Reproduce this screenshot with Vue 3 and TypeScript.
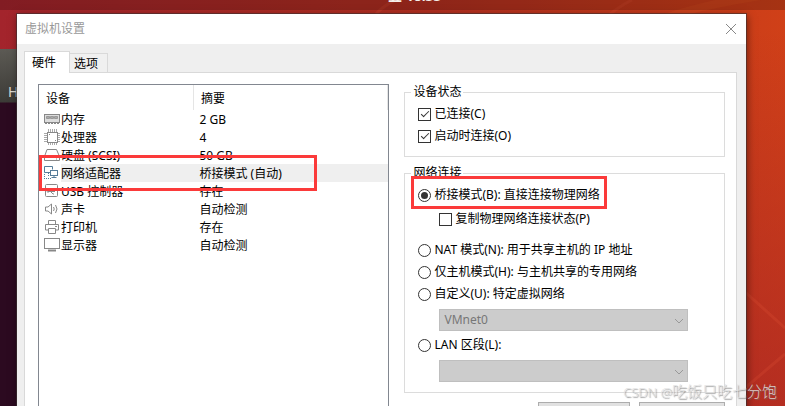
<script setup lang="ts">
import { ref } from 'vue'

interface Device {
  icon: string
  name: string
  summary: string
}

const devices: Device[] = [
  { icon: 'memory', name: '内存', summary: '2 GB' },
  { icon: 'cpu', name: '处理器', summary: '4' },
  { icon: 'disk', name: '硬盘 (SCSI)', summary: '50 GB' },
  { icon: 'network', name: '网络适配器', summary: '桥接模式 (自动)' },
  { icon: 'usb', name: 'USB 控制器', summary: '存在' },
  { icon: 'sound', name: '声卡', summary: '自动检测' },
  { icon: 'printer', name: '打印机', summary: '存在' },
  { icon: 'display', name: '显示器', summary: '自动检测' },
]

const selected = ref('network')
const connected = ref(true)
const connectAtPowerOn = ref(true)
const replicate = ref(false)
const mode = ref('bridged')
const vmnet = ref('VMnet0')
const segment = ref('')
</script>

<template>
  <div class="desktop">
    <svg class="wallpaper" viewBox="0 0 785 406" preserveAspectRatio="none" aria-hidden="true">
      <path d="M376 14 Q384 5 396 0" />
      <path d="M610 14 Q622 5 632 0" />
      <path class="band" d="M664 14 Q700 2 745 -6 L800 -6 Q730 4 690 14Z" />
      <path d="M745 292 L785 328" />
      <path d="M745 388 L785 354" />
    </svg>
    <div class="topbar"><span class="clock">五 18:33</span></div>
    <div class="dock"><span class="dock-label">H</span></div>

    <main class="dialog">
      <header class="titlebar">
        <h1>虚拟机设置</h1>
        <button class="close" type="button" aria-label="关闭">
          <svg width="12" height="12" viewBox="0 0 12 12"><path d="M1 1 L11 11 M11 1 L1 11" /></svg>
        </button>
      </header>

      <nav class="tabs" role="tablist">
        <button class="tab active" type="button" role="tab" aria-selected="true">硬件</button>
        <button class="tab" type="button" role="tab" aria-selected="false">选项</button>
      </nav>

      <section class="page">
        <div class="list">
          <table>
            <thead>
              <tr><th class="name-col">设备</th><th>摘要</th></tr>
            </thead>
            <tbody>
              <tr
                v-for="d in devices"
                :key="d.icon"
                :class="{ selected: d.icon === selected }"
                @click="selected = d.icon"
              >
                <td>
                  <div class="device">
                    <svg class="icon" width="18" height="18" viewBox="0 0 18 18" aria-hidden="true">
                      <g v-if="d.icon === 'memory'">
                        <rect x="1.5" y="4.5" width="15" height="8" fill="#ddd" />
                        <path d="M3.5 6.5h3v2h-3zM7.5 6.5h3v2h-3zM11.5 6.5h3v2h-3z" fill="#aaa" stroke="#999" />
                        <path d="M2 13.5h14" stroke-dasharray="2 1" />
                      </g>
                      <g v-else-if="d.icon === 'cpu'">
                        <path stroke="#aaa" d="M5.5 1v3M7.5 1v3M9.5 1v3M11.5 1v3M13.5 1v3M5.5 15v2M7.5 15v2M9.5 15v2M11.5 15v2M13.5 15v2M1 5.5h3M1 7.5h3M1 9.5h3M1 11.5h3M1 13.5h3M15 5.5h2M15 7.5h2M15 9.5h2M15 11.5h2M15 13.5h2" />
                        <rect x="4.5" y="4.500" width="10" height="10" />
                        <path d="M6 6.5h1M12 12.5h1" />
                      </g>
                      <g v-else-if="d.icon === 'disk'">
                        <path d="M4 3.5h9.500l3 7v4h-15v-4zM1.500 11.500h15M13 13h1" />
                      </g>
                      <g v-else-if="d.icon === 'network'" class="blue">
                        <path d="M7 8.500h-5.500v-6h8v3" />
                        <path d="M1 14.500h8M1.500 10v4M5.500 9v3" stroke-dasharray="1 1" />
                        <rect x="7.500" y="6.500" width="7" height="5" />
                        <path d="M11 12v2M8.500 13.500h5" />
                      </g>
                      <g v-else-if="d.icon === 'usb'">
                        <rect x="2.500" y="2.500" width="12" height="12" rx="1" />
                        <path d="M5 9.500h7M7 9l2-2.500h2M8 10l2 2h1" />
                        <circle cx="5" cy="9.500" r=".8" />
                      </g>
                      <g v-else-if="d.icon === 'sound'">
                        <path d="M2.500 7v4h2.500l3.500 3v-10l-3.500 3zM10.500 7q1.500 2 0 4M12.500 5q3 4 0 8" />
                      </g>
                      <g v-else-if="d.icon === 'printer'">
                        <path d="M5.500 6V2.500h7V6M5 12H2.500V6.500h13V12H13" />
                        <path d="M5.500 10.500h7v5h-7zM12 8.500h2" />
                      </g>
                      <g v-else>
                        <rect x="1.500" y="2.500" width="15" height="10" />
                        <path d="M5 14.500h8" stroke-width="2" />
                      </g>
                    </svg>
                    <span class="label">{{ d.name }}</span>
                  </div>
                </td>
                <td class="summary">{{ d.summary }}</td>
              </tr>
            </tbody>
          </table>
          <div class="mark mark-list"></div>
        </div>

        <div class="settings">
          <fieldset>
            <legend>设备状态</legend>
            <label class="option"><input v-model="connected" type="checkbox" />已连接(C)</label>
            <label class="option"><input v-model="connectAtPowerOn" type="checkbox" />启动时连接(O)</label>
          </fieldset>

          <fieldset class="network">
            <legend>网络连接</legend>
            <label class="option marked">
              <input v-model="mode" type="radio" name="mode" value="bridged" />桥接模式(B): 直接连接物理网络
              <span class="mark mark-option"></span>
            </label>
            <label class="option nested"><input v-model="replicate" type="checkbox" />复制物理网络连接状态(P)</label>
            <label class="option spaced"><input v-model="mode" type="radio" name="mode" value="nat" />NAT 模式(N): 用于共享主机的 IP 地址</label>
            <label class="option"><input v-model="mode" type="radio" name="mode" value="host" />仅主机模式(H): 与主机共享的专用网络</label>
            <label class="option"><input v-model="mode" type="radio" name="mode" value="custom" />自定义(U): 特定虚拟网络</label>
            <div class="select">
              <select v-model="vmnet" aria-label="特定虚拟网络" disabled>
                <option>VMnet0</option>
              </select>
              <svg width="10" height="6" viewBox="0 0 10 6"><path d="M1 1l4 4 4-4" /></svg>
            </div>
            <label class="option lan"><input v-model="mode" type="radio" name="mode" value="lan" />LAN 区段(L):</label>
            <div class="select">
              <select v-model="segment" aria-label="LAN 区段" disabled>
                <option value=""></option>
              </select>
              <svg width="10" height="6" viewBox="0 0 10 6"><path d="M1 1l4 4 4-4" /></svg>
            </div>
          </fieldset>

          <div class="actions">
            <button type="button" aria-label="LAN 区段"></button>
            <button type="button" aria-label="高级"></button>
          </div>
        </div>
      </section>
    </main>

    <div class="watermark"><span class="brand">CSDN @</span>吃饭只吃七分饱</div>
  </div>
</template>

<style>
body {
  margin: 0;
}
</style>

<style scoped>
.desktop {
  position: relative;
  box-sizing: border-box;
  height: 100vh;
  overflow: hidden;
  padding: 14px 39px 0 17px;
  background: linear-gradient(180deg, transparent 30px, rgba(165, 35, 38, 0.8) 500px),
    linear-gradient(90deg, #a3242c, #b22f20 55%, #d04018);
  font-family: "Noto Sans", "Noto Sans CJK SC", sans-serif;
  font-size: 12px;
  line-height: 16px;
  color: #000;
}
.wallpaper {
  position: absolute;
  inset: 0;
  width: 100%;
  height: 100%;
  fill: none;
  stroke: rgba(235, 90, 60, 0.2);
  stroke-width: 3;
}
.wallpaper .band {
  fill: rgba(240, 110, 40, 0.15);
  stroke: none;
}
.topbar {
  position: absolute;
  inset: 0 0 auto;
  height: 10px;
  background: rgba(0, 0, 0, 0.2);
}
.clock {
  position: absolute;
  left: 388px;
  bottom: 4px;
  color: #f4efec;
  font-size: 14px;
  font-weight: 700;
  line-height: 20px;
  white-space: nowrap;
}
.dock {
  position: absolute;
  inset: 49px auto 0 0;
  width: 17px;
  background: linear-gradient(#5c5a54, #3c3b37 53px, #2c0a20 54px);
}
.dock-label {
  position: absolute;
  top: 33px;
  left: 8px;
  color: #dfdbd2;
  font-size: 14px;
  line-height: 20px;
}
.dialog {
  position: relative;
  background: #efefef;
  box-shadow: 0 0 0 1px rgba(60, 50, 50, 0.6), 1px 2px 8px rgba(0, 0, 0, 0.5);
}
.titlebar {
  display: flex;
  align-items: center;
  justify-content: space-between;
  height: 30px;
  padding: 0 9px 0 8px;
  background: #fff;
}
h1 {
  margin: 0;
  color: #999;
  font-size: 12px;
  font-weight: 400;
}
button {
  box-sizing: border-box;
  margin: 0;
  font: inherit;
  color: inherit;
}
.close {
  display: flex;
  padding: 0;
  border: 0;
  background: none;
}
.close svg {
  fill: none;
  stroke: #888;
}
.tabs {
  display: flex;
  align-items: flex-end;
  padding: 7px 7px 0;
}
.tab {
  height: 19px;
  padding: 2px 9px 0 4px;
  border: 1px solid #d9d9d9;
  border-width: 1px 1px 0 0;
  background: #f0f0f0;
}
.tab.active {
  position: relative;
  height: 22px;
  margin-bottom: -1px;
  padding: 0 13px 0 7px;
  border-width: 1px 1px 0 1px;
  background: #fff;
}
.page {
  display: grid;
  grid-template-columns: 352fr 321fr;
  gap: 15px;
  margin: 0 9px 0 7px;
  padding: 11px 11px 0 13px;
  border: 1px solid #d9d9d9;
  background: #fff;
}
.list {
  position: relative;
  border: 1px solid #828790;
}
table {
  width: 100%;
  border-collapse: collapse;
  table-layout: fixed;
}
th,
td {
  padding: 0;
  font-weight: 400;
  text-align: left;
  white-space: nowrap;
}
th {
  height: 22px;
  padding: 3px 0 0 7px;
  border-right: 1px solid #e5e5e5;
}
.name-col {
  width: 147px;
}
td {
  height: 18px;
}
.device {
  display: flex;
  align-items: center;
  padding-left: 4px;
}
.label {
  flex: 1;
  padding-top: 2px;
}
.icon {
  fill: none;
  stroke: #888;
}
.blue {
  stroke: #557c99;
}
.summary {
  height: 16px;
  padding: 2px 0 0 6px;
}
.selected .label,
.selected .summary {
  background: #efefef;
}
.mark {
  position: absolute;
  box-sizing: border-box;
  border: 3px solid #fb3a3a;
  pointer-events: none;
}
.mark-list {
  top: 70px;
  left: 0;
  width: 278px;
  height: 36px;
}
.mark-option {
  inset: -8px -7px -3px -7px;
}
.settings {
  min-width: 0;
  padding-bottom: 40px;
}
fieldset {
  min-width: 0;
  margin: 0;
  padding: 3px 36px 9px 13px;
  border: 1px solid #dcdcdc;
}
legend {
  margin-left: -7px;
  padding: 0 2px;
}
.network {
  margin-top: 8px;
  padding-bottom: 10px;
}
.option {
  display: flex;
  align-items: center;
  gap: 3px;
  width: max-content;
  height: 22px;
  white-space: nowrap;
}
.marked {
  position: relative;
}
.nested {
  margin: 2px 0 0 21px;
}
.spaced {
  margin-top: 9px;
}
.lan {
  margin-top: 3px;
}
input {
  position: relative;
  flex: none;
  box-sizing: border-box;
  width: 13px;
  height: 13px;
  margin: 0;
  appearance: none;
  border: 1px solid #333;
  background: #fff;
}
input[type="radio"] {
  border-radius: 50%;
}
input:checked::after {
  content: "";
  position: absolute;
}
input[type="checkbox"]:checked::after {
  top: 0;
  left: 4px;
  width: 3px;
  height: 7px;
  border: solid #333;
  border-width: 0 1px 1px 0;
  transform: rotate(45deg);
}
input[type="radio"]:checked::after {
  inset: 2px;
  border-radius: 50%;
  background: #333;
}
.select {
  position: relative;
  margin: 4px 0 0 21px;
}
select {
  display: block;
  box-sizing: border-box;
  width: 100%;
  height: 22px;
  margin: 0;
  padding: 0 20px 0 4px;
  appearance: none;
  border: 1px solid #bfbfbf;
  border-radius: 0;
  background: #ccc;
  color: #777;
  font: inherit;
  opacity: 1;
}
.select svg {
  position: absolute;
  top: 9px;
  right: 4px;
  fill: none;
  stroke: #999;
}
.actions {
  display: flex;
  justify-content: flex-end;
  gap: 9px;
  margin-top: 9px;
}
.actions button {
  height: 23px;
  width: 86px;
  padding: 0;
  border: 1px solid #adadad;
  background: #e1e1e1;
}
.actions button:first-child {
  width: 92px;
}
.watermark {
  position: absolute;
  right: 8px;
  bottom: 4px;
  color: rgba(225, 225, 225, 0.9);
  font-size: 15px;
  font-weight: 300;
  line-height: 20px;
  text-shadow: 1px 1px 1px rgba(110, 110, 110, 0.7);
  white-space: nowrap;
}
.brand {
  font-size: 13px;
}
</style>
